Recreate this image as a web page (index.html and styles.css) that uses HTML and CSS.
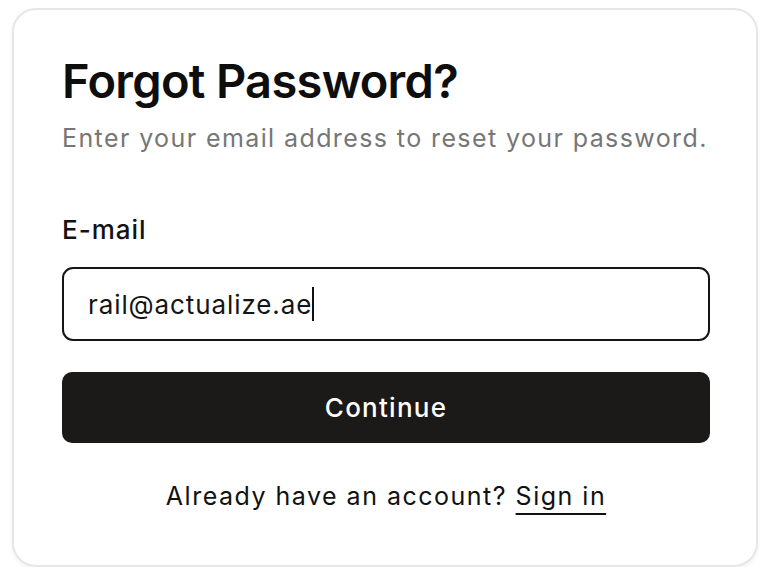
FILE: index.html
```html
<!DOCTYPE html>
<html lang="en">
<head>
<meta charset="utf-8">
<title>Forgot Password</title>
<link rel="stylesheet" href="styles.css">
</head>
<body>
<main class="card">
  <h1 class="title">Forgot Password?</h1>
  <p class="subtitle">Enter your email address to reset your password.</p>
  <form class="form">
    <label class="label" for="email">E-mail</label>
    <div class="input"><span class="value">rail@actualize.ae</span><span class="caret"></span></div>
    <button class="btn" type="button">Continue</button>
  </form>
  <p class="footer">Already have an account? <a class="link" href="#">Sign in</a></p>
</main>
</body>
</html>
```
FILE: styles.css
```css
* { box-sizing: border-box; }
html, body { margin: 0; background: #ffffff; }
body {
  font-family: Inter, "Noto Sans", sans-serif;
  color: #111111;
  padding: 8px 8px 0 12px;
}
.card {
  width: 746px;
  height: 559px;
  border: 2px solid #e6e6e6;
  border-radius: 24px;
  box-shadow: 0 2px 4px rgba(0,0,0,0.06);
  padding: 43px 46px 0 48px;
}
.title {
  margin: 0;
  font-size: 47px;
  font-weight: 600;
  letter-spacing: -0.7px;
  line-height: 56px;
  color: #0e0e0e;
}
.subtitle {
  margin: 13px 0 0;
  font-size: 25px;
  letter-spacing: 1.4px;
  line-height: 32px;
  color: #767676;
}
.form { display: flex; flex-direction: column; margin-top: 59px; }
.label { font-size: 26px; font-weight: 500; letter-spacing: 1px; line-height: 34px; color: #121212; }
.input {
  margin-top: 20px;
  height: 74px;
  border: 2px solid #151515;
  border-radius: 11px;
  display: flex;
  align-items: center;
  padding-left: 24px;
  font-size: 26px;
  letter-spacing: 0.9px;
  color: #151515;
}
.caret { width: 2px; height: 34px; background: #111; margin-left: 0; }
.btn {
  margin-top: 31px;
  height: 71px;
  border: 0;
  border-radius: 10px;
  background: #1c1a19;
  color: #fff;
  font-family: inherit;
  font-size: 26px;
  font-weight: 500;
  letter-spacing: 1.25px;
}
.footer {
  margin: 36px 0 0;
  text-align: center;
  font-size: 25px;
  letter-spacing: 1.5px;
  line-height: 34px;
  color: #111;
}
.link { color: #111; text-decoration: underline; text-underline-offset: 8px; text-decoration-thickness: 2px; }
```
